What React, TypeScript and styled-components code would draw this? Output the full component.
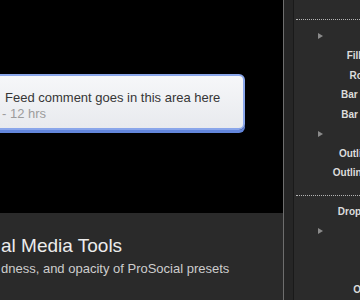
import styled, { createGlobalStyle } from "styled-components";

const GlobalStyle = createGlobalStyle`
    html, body {
        margin: 0;
        padding: 0;
        background-color: #000;
    }
    body {
        font-family: "Liberation Sans", Arial, sans-serif;
    }
`;

const Screen = styled.div`
    display: flex;
    width: 360px;
    height: 300px;
    overflow: hidden;
    background-color: #2b2b2b;
`;

// viewer side
const Viewer = styled.div`
    display: flex;
    flex-direction: column;
    width: 283px;
    flex: none;
`;
const VideoFrame = styled.div`
    height: 213px;
    box-sizing: border-box;
    padding-top: 74px;
    background-color: #000;
`;
const CommentCard = styled.div`
    box-sizing: border-box;
    width: 255px;
    margin-left: -10px;
    padding: 14px 10px 6px 13px;
    border: 2px solid #8aa6ea;
    border-radius: 6px;
    box-shadow: 0 3px 0 #6386dc;
    background: linear-gradient(#f6f7f9, #e8eaee);
`;
const CommentText = styled.div`
    font-size: 13px;
    line-height: 16px;
    color: #363636;
    white-space: nowrap;
`;
const CommentMeta = styled.div`
    font-size: 13px;
    line-height: 16px;
    color: #9c9c9c;
    text-indent: -3px;
    white-space: nowrap;
`;
const Caption = styled.div`
    flex: 1;
    padding: 22px 0 0 1px;
    background-color: #2a2a2a;
`;
const Title = styled.div`
    font-size: 19px;
    line-height: 22px;
    color: #ececec;
    white-space: nowrap;
`;
const Subtitle = styled.div`
    margin-top: 4px;
    font-size: 13px;
    line-height: 16px;
    color: #cdcdcd;
    white-space: nowrap;
`;

// split between viewer and inspector
const Divider = styled.div`
    width: 1px;
    flex: none;
    background-color: #6e6e6e;
`;
const Gutter = styled.div`
    width: 9px;
    flex: none;
    background-color: #262626;
    border-right: 1px solid #1a1a1a;
`;

// inspector
const Inspector = styled.div`
    flex: none;
    width: 200px;
    padding: 7px 0 0 2px;
    background-color: #2b2b2b;
`;
const Row = styled.div`
    display: flex;
    align-items: center;
    height: 19.5px;
`;
const Separator = styled.div`
    height: 19.5px;
    box-sizing: border-box;
    padding-top: 12px;
    &:after {
        content: "";
        display: block;
        border-top: 1px dotted #b4b4b4;
    }
`;
const Disclosure = styled.svg`
    margin-left: 22px;
    fill: #8a8a8a;
`;
const LabelCell = styled.div`
    width: 94px;
    display: flex;
    justify-content: flex-end;
`;
const Label = styled.span`
    font-size: 10px;
    font-weight: bold;
    color: #dcdcdc;
    white-space: nowrap;
`;

type Param = { kind: "sep" } | { kind: "group" } | { kind: "param"; label: string };

const params: Param[] = [
    { kind: "sep" },
    { kind: "group" },
    { kind: "param", label: "Fill Color" },
    { kind: "param", label: "Rotation" },
    { kind: "param", label: "Bar Size X" },
    { kind: "param", label: "Bar Size Y" },
    { kind: "group" },
    { kind: "param", label: "Outline On" },
    { kind: "param", label: "Outline Size" },
    { kind: "sep" },
    { kind: "param", label: "Drop Color" },
    { kind: "group" },
    { kind: "param", label: "Blur" },
    { kind: "param", label: "Color" },
    { kind: "param", label: "Opacity" },
];

function App() {
    return (
        <>
            <GlobalStyle />
            <Screen>
                <Viewer>
                    <VideoFrame>
                        <CommentCard>
                            <CommentText>Feed comment goes in this area here</CommentText>
                            <CommentMeta>- 12 hrs</CommentMeta>
                        </CommentCard>
                    </VideoFrame>
                    <Caption>
                        <Title>al Media Tools</Title>
                        <Subtitle>dness, and opacity of ProSocial presets</Subtitle>
                    </Caption>
                </Viewer>
                <Divider />
                <Gutter />
                <Inspector>
                    {params.map((p, i) => {
                        if (p.kind === "sep") return <Separator key={i} />;
                        if (p.kind === "group")
                            return (
                                <Row key={i}>
                                    <Disclosure width="5" height="6" viewBox="0 0 5 6">
                                        <polygon points="0,0 5,3 0,6" />
                                    </Disclosure>
                                </Row>
                            );
                        return (
                            <Row key={i}>
                                <LabelCell>
                                    <Label>{p.label}</Label>
                                </LabelCell>
                            </Row>
                        );
                    })}
                </Inspector>
            </Screen>
        </>
    );
}

export default App;
